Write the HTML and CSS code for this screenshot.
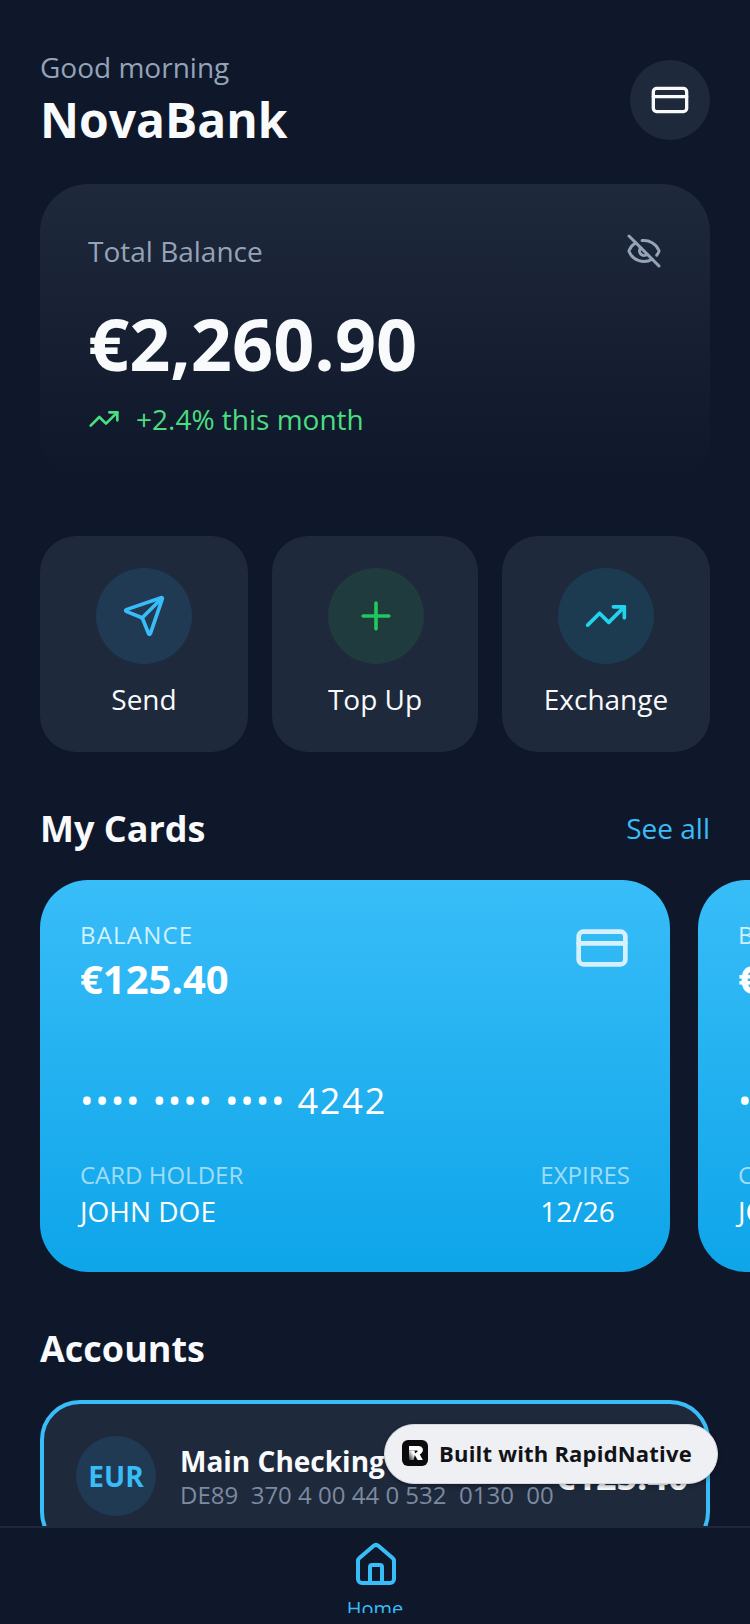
FILE: index.html
```html
<!DOCTYPE html>
<html lang="en">
<head>
<meta charset="UTF-8" />
<title>NovaBank</title>
<link rel="stylesheet" href="styles.css">
</head>
<body>
<div class="screen">
  <main class="content">
    <!-- Header -->
    <header class="header">
      <div>
        <div class="greeting">Good morning</div>
        <h1 class="brand">NovaBank</h1>
      </div>
      <div class="header-btn">
        <svg class="icon icon-40" viewBox="0 0 24 24"><rect width="20" height="14" x="2" y="5" rx="2"/><path d="M2 10h20"/></svg>
      </div>
    </header>

    <!-- Total balance -->
    <section class="balance-card">
      <div class="balance-top">
        <span class="balance-label">Total Balance</span>
        <svg class="icon icon-36 muted" viewBox="0 0 24 24"><path d="M10.733 5.076a10.744 10.744 0 0 1 11.205 6.575 1 1 0 0 1 0 .696 10.747 10.747 0 0 1-1.444 2.49"/><path d="M14.084 14.158a3 3 0 0 1-4.242-4.242"/><path d="M17.479 17.499a10.75 10.75 0 0 1-15.417-5.151 1 1 0 0 1 0-.696 10.75 10.75 0 0 1 4.446-5.143"/><path d="m2 2 20 20"/></svg>
      </div>
      <div class="balance-amount">€2,260.90</div>
      <div class="balance-trend">
        <svg class="icon icon-32" viewBox="0 0 24 24"><path d="M16 7h6v6"/><path d="m22 7-8.5 8.5-5-5L2 17"/></svg>
        <span>+2.4% this month</span>
      </div>
    </section>

    <!-- Quick actions -->
    <section class="actions">
      <div class="action">
        <div class="action-icon send">
          <svg class="icon icon-44" viewBox="0 0 24 24"><path d="M14.536 21.686a.5.5 0 0 0 .937-.024l6.5-19a.496.496 0 0 0-.635-.635l-19 6.5a.5.5 0 0 0-.024.937l7.93 3.18a2 2 0 0 1 1.112 1.11z"/><path d="m21.854 2.147-10.94 10.939"/></svg>
        </div>
        <span>Send</span>
      </div>
      <div class="action">
        <div class="action-icon topup">
          <svg class="icon icon-44" viewBox="0 0 24 24"><path d="M5 12h14"/><path d="M12 5v14"/></svg>
        </div>
        <span>Top Up</span>
      </div>
      <div class="action">
        <div class="action-icon exchange">
          <svg class="icon icon-44" viewBox="0 0 24 24"><path d="M16 7h6v6"/><path d="m22 7-8.5 8.5-5-5L2 17"/></svg>
        </div>
        <span>Exchange</span>
      </div>
    </section>

    <!-- Cards -->
    <div class="section-head">
      <h2>My Cards</h2>
      <span class="see-all">See all</span>
    </div>
    <section class="cards">
      <div class="card">
        <div class="card-top">
          <div>
            <div class="card-label spaced">BALANCE</div>
            <div class="card-balance">€125.40</div>
          </div>
          <svg class="icon icon-56 card-icon" viewBox="0 0 24 24"><rect width="20" height="14" x="2" y="5" rx="2"/><path d="M2 10h20"/></svg>
        </div>
        <div class="card-number">•••• •••• •••• 4242</div>
        <div class="card-bottom">
          <div>
            <div class="card-label dim">CARD HOLDER</div>
            <div class="card-value">JOHN DOE</div>
          </div>
          <div>
            <div class="card-label dim">EXPIRES</div>
            <div class="card-value">12/26</div>
          </div>
        </div>
      </div>
      <div class="card">
        <div class="card-top">
          <div>
            <div class="card-label spaced">BALANCE</div>
            <div class="card-balance">€125.40</div>
          </div>
        </div>
        <div class="card-number">•••• •••• •••• 4242</div>
        <div class="card-bottom">
          <div>
            <div class="card-label dim">CARD HOLDER</div>
            <div class="card-value">JOHN DOE</div>
          </div>
        </div>
      </div>
    </section>

    <!-- Accounts -->
    <div class="section-head accounts-head">
      <h2>Accounts</h2>
    </div>
    <section class="account">
      <div class="account-badge">EUR</div>
      <div class="account-info">
        <div class="account-name">Main Checking</div>
        <div class="account-iban">DE89&nbsp; 370 4 00 44 0 532&nbsp; 0130&nbsp; 00</div>
      </div>
      <div class="account-amount">€125.40</div>
    </section>
  </main>

  <!-- Bottom nav -->
  <nav class="tabbar">
    <div class="tab">
      <svg class="icon icon-48 tab-icon" viewBox="0 0 24 24"><path d="M15 21v-8a1 1 0 0 0-1-1h-4a1 1 0 0 0-1 1v8"/><path d="M3 10a2 2 0 0 1 .709-1.528l7-5.999a2 2 0 0 1 2.582 0l7 5.999A2 2 0 0 1 21 10v9a2 2 0 0 1-2 2H5a2 2 0 0 1-2-2z"/></svg>
      <span>Home</span>
    </div>
  </nav>

  <!-- Floating pill -->
  <div class="built-with">
    <svg class="rn-logo" viewBox="0 0 26 26">
      <defs>
        <linearGradient id="rn-fade" x1="0" y1="1" x2="0.7" y2="0.3">
          <stop offset="0" stop-color="#2a2a2c"/>
          <stop offset="1" stop-color="#fff"/>
        </linearGradient>
      </defs>
      <rect width="26" height="26" rx="6" fill="#0b0b0d"/>
      <path d="M7 6h10a4 4 0 0 1 2.6 7l-1.8 1.5 3 5.5h-5.2l-3.4-6 3.2-2.3c.5-.4.2-1.2-.4-1.2H7z" fill="#fff"/>
      <path d="M7 10.500h5.500l.6 3.500-1.600 6H7z" fill="url(#rn-fade)"/>
    </svg>
    <span>Built with RapidNative</span>
  </div>
</div>
</body>
</html>
```

FILE: styles.css
```css
* {
  box-sizing: border-box;
}

html, body {
  margin: 0;
  padding: 0;
}

body {
  font-family: "Open Sans", "Noto Sans", sans-serif;
  background: #0f172a;
  color: #f8fafc;
}

.screen {
  position: relative;
  width: 750px;
  height: 1624px;
  display: flex;
  flex-direction: column;
  overflow: hidden;
}

.content {
  flex: 1;
  min-height: 0;
  overflow: hidden;
  padding: 48px 40px 0;
}

/* Icons */
.icon {
  fill: none;
  stroke: currentColor;
  stroke-width: 2;
  stroke-linecap: round;
  stroke-linejoin: round;
  flex: none;
  display: block;
}
.icon-32 { width: 32px; height: 32px; }
.icon-36 { width: 36px; height: 36px; }
.icon-40 { width: 40px; height: 40px; }
.icon-44 { width: 44px; height: 44px; }
.icon-48 { width: 48px; height: 48px; }
.icon-56 { width: 56px; height: 56px; }
.muted { color: #94a3b8; }

/* Header */
.header {
  display: flex;
  justify-content: space-between;
  align-items: center;
  margin-bottom: 30px;
}
.greeting {
  font-size: 28px;
  line-height: 38px;
  color: #94a3b8;
}
.brand {
  margin: 0;
  font-size: 48px;
  line-height: 68px;
  font-weight: 700;
}
.header-btn {
  width: 80px;
  height: 80px;
  margin-bottom: 2px;
  border-radius: 50%;
  background: #1e293b;
  display: flex;
  align-items: center;
  justify-content: center;
}

/* Balance card */
.balance-card {
  height: 300px;
  padding: 48px;
  border-radius: 48px;
  background: linear-gradient(180deg, #1e293b 0%, #0f172a 100%);
  margin-bottom: 52px;
}
.balance-top {
  display: flex;
  justify-content: space-between;
  align-items: center;
  height: 40px;
  margin-top: -1px;
}
.balance-label {
  font-size: 28px;
  color: #94a3b8;
}
.balance-amount {
  font-size: 72px;
  line-height: 98px;
  font-weight: 700;
  margin-top: 23px;
}
.balance-trend {
  display: flex;
  align-items: center;
  gap: 16px;
  margin-top: 7px;
  font-size: 28px;
  line-height: 40px;
  color: #4ade80;
}

/* Actions */
.actions {
  display: grid;
  grid-template-columns: 208px 206px 208px;
  gap: 24px;
  margin-bottom: 52px;
}
.action {
  height: 216px;
  padding-top: 32px;
  border-radius: 36px;
  background: #1e293b;
  display: flex;
  flex-direction: column;
  align-items: center;
  gap: 15px;
  font-size: 28px;
  line-height: 40px;
}
.action-icon {
  width: 96px;
  height: 96px;
  border-radius: 50%;
  display: flex;
  align-items: center;
  justify-content: center;
}
.send { background: #213a54; color: #38bdf8; }
.topup { background: #1f3b3e; color: #22c55e; margin-left: 2px; }
.exchange { background: #1c3b50; color: #22d3ee; }

/* Section heads */
.section-head {
  display: flex;
  justify-content: space-between;
  align-items: center;
  height: 48px;
  margin-bottom: 28px;
}
.section-head h2 {
  margin: 0;
  font-size: 36px;
  font-weight: 700;
}
.see-all {
  font-size: 28px;
  color: #38bdf8;
}
.accounts-head {
  margin-top: 52px;
}

/* Credit cards */
.cards {
  display: flex;
  gap: 28px;
  width: 1400px;
}
.card {
  width: 630px;
  height: 392px;
  padding: 38px 40px;
  border-radius: 48px;
  background: linear-gradient(180deg, #38bdf8 0%, #0ea5e9 100%);
  color: #fff;
  display: flex;
  flex-direction: column;
}
.card-top {
  display: flex;
  justify-content: space-between;
  align-items: flex-start;
  height: 112px;
}
.card-icon {
  opacity: 0.8;
  margin-top: 2px;
}
.card-label {
  font-size: 24px;
  line-height: 34px;
  color: rgba(255, 255, 255, 0.8);
}
.card-label.spaced {
  letter-spacing: 1.2px;
}
.card-label.dim {
  color: rgba(255, 255, 255, 0.6);
}
.card-balance {
  font-size: 40px;
  line-height: 54px;
  font-weight: 700;
}
.card-number {
  margin-top: 47px;
  font-size: 36px;
  line-height: 48px;
  letter-spacing: 1.8px;
}
.card-bottom {
  display: flex;
  justify-content: space-between;
  margin-top: 33px;
}
.card-value {
  font-size: 28px;
  line-height: 38px;
}

/* Account row */
.account {
  display: flex;
  align-items: center;
  height: 152px;
  padding: 0 32px;
  border: 4px solid #38bdf8;
  border-radius: 40px;
  background: #1e293b;
}
.account-badge {
  flex: none;
  width: 80px;
  height: 80px;
  margin-right: 24px;
  border-radius: 50%;
  background: #213a54;
  color: #38bdf8;
  font-size: 28px;
  font-weight: 700;
  display: flex;
  align-items: center;
  justify-content: center;
}
.account-info {
  flex: none;
  margin-right: 1px;
}
.account-name {
  font-size: 28px;
  line-height: 38px;
  font-weight: 700;
}
.account-iban {
  font-size: 24px;
  line-height: 30px;
  color: #7c8aa0;
  white-space: nowrap;
}
.account-amount {
  flex: none;
  font-size: 36px;
  font-weight: 700;
}

/* Tab bar */
.tabbar {
  flex: none;
  height: 98px;
  border-top: 2px solid #1e293b;
  background: #0f172a;
  color: #38bdf8;
  padding-top: 13px;
  display: flex;
  justify-content: center;
}
.tab {
  height: 72px;
  overflow: hidden;
  display: flex;
  flex-direction: column;
  align-items: center;
  gap: 6px;
  font-size: 20px;
  line-height: 28px;
}
.tab-icon {
  margin-left: 2px;
}

/* Floating pill */
.built-with {
  position: absolute;
  left: 384px;
  top: 1424px;
  width: 334px;
  height: 60px;
  padding-bottom: 3px;
  border-radius: 30px;
  background: #eef0f4;
  border: 1px solid #d5d8de;
  box-shadow: 0 2px 4px rgba(0, 0, 0, 0.3);
  display: flex;
  align-items: center;
  gap: 11px;
  padding-left: 17px;
  color: #111318;
  font-size: 22px;
  font-weight: 700;
  letter-spacing: 0.2px;
  white-space: nowrap;
}
.rn-logo {
  width: 26px;
  height: 26px;
  flex: none;
}
```
